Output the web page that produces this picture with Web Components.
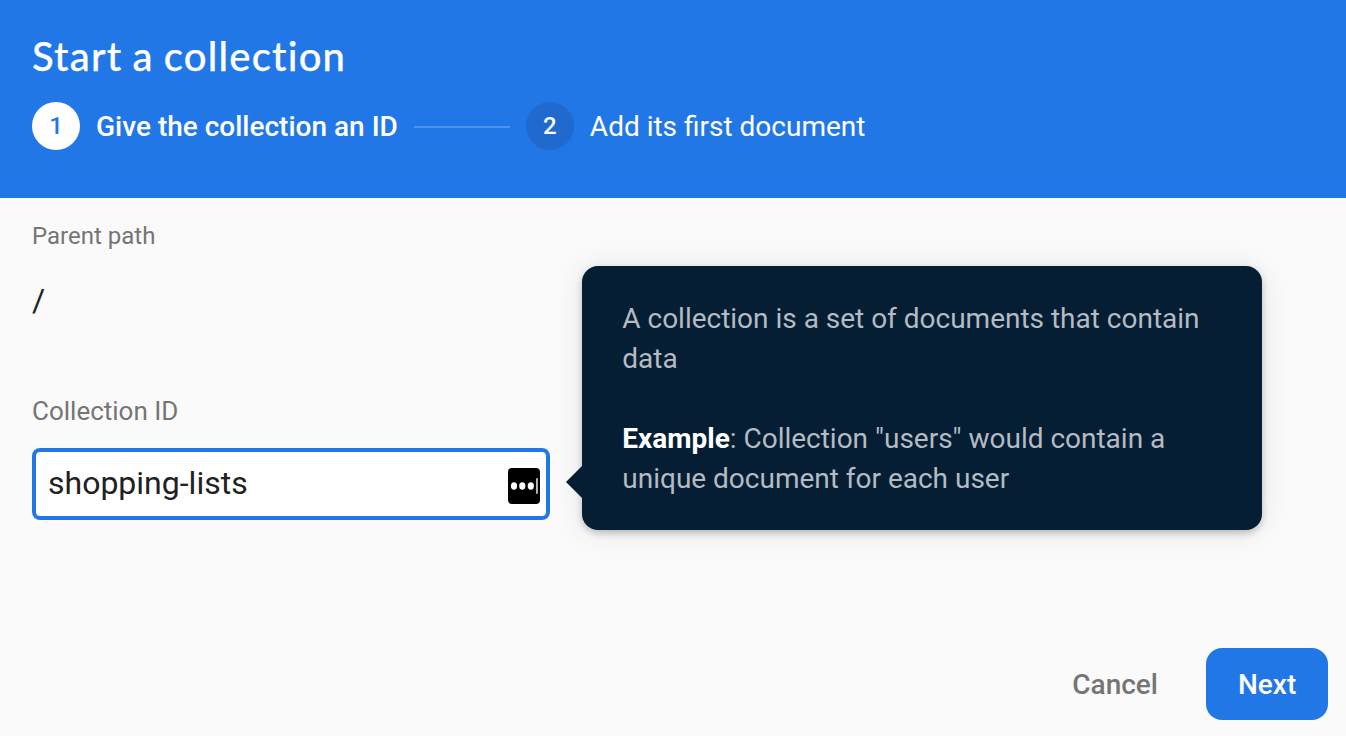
<!DOCTYPE html>
<html lang="en">
<head>
<meta charset="utf-8">
<title>Start a collection</title>
<style>
html, body { margin: 0; height: 100%; }
body { font-family: Roboto, sans-serif; background: #fafafa; color: #212121; overflow: hidden; }
</style>
</head>
<body>
<collection-dialog></collection-dialog>
<script>
const define = (name, html) => customElements.define(name, class extends HTMLElement {
  constructor() {
    super();
    const t = document.createElement('template');
    t.innerHTML = html;
    this.attachShadow({ mode: 'open' }).append(t.content.cloneNode(true));
  }
});

define('wizard-step', `
<style>
:host { display: flex; align-items: center; gap: 16px; color: #fff; font-size: 28px; line-height: 48px; white-space: nowrap; }
.badge { width: 48px; height: 48px; border-radius: 50%; background: #2069cf; text-align: center; font-size: 24px; font-weight: 500; }
.text { padding-top: 1px; margin-bottom: -1px; height: 48px; }
:host([active]) { font-weight: 500; }
:host([active]) .badge { background: #fff; color: #2277e7; }
</style>
<div class="badge"><slot name="number"></slot></div><div class="text"><slot></slot></div>`);

define('dialog-header', `
<style>
:host { display: flex; flex-direction: column; box-sizing: border-box; height: 198px; padding: 32px 32px 0; background: #2277e7; color: #fff; }
h1 { margin: 0 0 22px; font: 500 40px/48px Lato, sans-serif; letter-spacing: 1.2px; word-spacing: -1.2px; -webkit-text-stroke: 0.25px #fff; white-space: nowrap; }
nav { display: flex; align-items: center; height: 48px; }
.line { width: 96px; height: 2px; margin: 2px 16px 0; background: #4e92ec; }
</style>
<h1>Start a collection</h1>
<nav>
<wizard-step active><span slot="number">1</span>Give the collection an ID</wizard-step>
<div class="line"></div>
<wizard-step><span slot="number">2</span>Add its first document</wizard-step>
</nav>`);

define('password-badge', `
<style>:host, svg { display: block; width: 32px; height: 36px; }</style>
<svg viewBox="0 0 32 36"><rect width="32" height="36" rx="4"/><g fill="#fff"><ellipse cx="6" cy="18" rx="3.1" ry="3.7"/><ellipse cx="14.3" cy="18" rx="3.1" ry="3.7"/><ellipse cx="22.8" cy="18" rx="3.1" ry="3.7"/><path d="M28.1 10.3h1.7v15.4h-1.7z" fill="#ccc"/></g></svg>`);

define('text-field', `
<style>
:host { display: block; }
label { display: block; font-size: 26px; line-height: 32px; color: #757575; }
.box { display: flex; align-items: center; justify-content: space-between; box-sizing: border-box; width: 518px; height: 72px; margin-top: 21px; padding: 4px 6px 0 12px; border: 4px solid #2277e7; border-radius: 8px; background: #fff; font-size: 32px; line-height: 40px; }
.value { margin-top: -6px; }
</style>
<label><slot name="label"></slot></label>
<div class="box"><span class="value"><slot></slot></span><password-badge></password-badge></div>`);

define('info-callout', `
<style>
:host { display: block; position: relative; box-sizing: border-box; width: 680px; height: 264px; padding: 33px 40px 0; border-radius: 16px; background: #051e34; color: #b4bbc2; font-size: 28px; line-height: 40px; box-shadow: 0 4px 8px -2px rgba(0,0,0,.2), 0 2px 10px rgba(0,0,0,.08), 0 2px 28px rgba(0,0,0,.09); }
:host::before { content: ""; position: absolute; left: -16px; top: 200px; border: 16px solid transparent; border-right-color: #051e34; border-left: 0; }
</style>
<slot></slot>`);

define('action-button', `
<style>
:host { display: block; box-sizing: border-box; height: 72px; padding: 0 32px; border-radius: 16px; color: #757575; font-size: 28px; font-weight: 500; line-height: 73px; text-align: center; }
:host([primary]) { background: #2277e7; color: #fff; width: 122px; }
</style>
<slot></slot>`);

define('collection-dialog', `
<style>
:host { display: flex; flex-direction: column; height: 736px; }
main { display: flex; flex: 1; padding: 0 32px; gap: 32px; }
.form { width: 518px; }
.label { font-size: 24px; line-height: 32px; color: #757575; margin-top: 22px; }
.path { font-size: 32px; line-height: 40px; margin-top: 28px; }
text-field { margin-top: 75px; }
info-callout { margin-top: 68px; }
p { margin: 0 0 40px 0.3px; letter-spacing: -0.01px; }
b { color: #fff; }
footer { display: flex; justify-content: flex-end; gap: 16px; padding: 0 18px 16px 0; }
</style>
<dialog-header></dialog-header>
<main>
<div class="form">
<div class="label">Parent path</div>
<div class="path">/</div>
<text-field><span slot="label">Collection ID</span>shopping-lists</text-field>
</div>
<info-callout>
<p>A collection is a set of documents that contain<br>data</p>
<p><b>Example</b>: Collection "users" would contain a<br>unique document for each user</p>
</info-callout>
</main>
<footer><action-button>Cancel</action-button><action-button primary>Next</action-button></footer>`);
</script>
</body>
</html>
